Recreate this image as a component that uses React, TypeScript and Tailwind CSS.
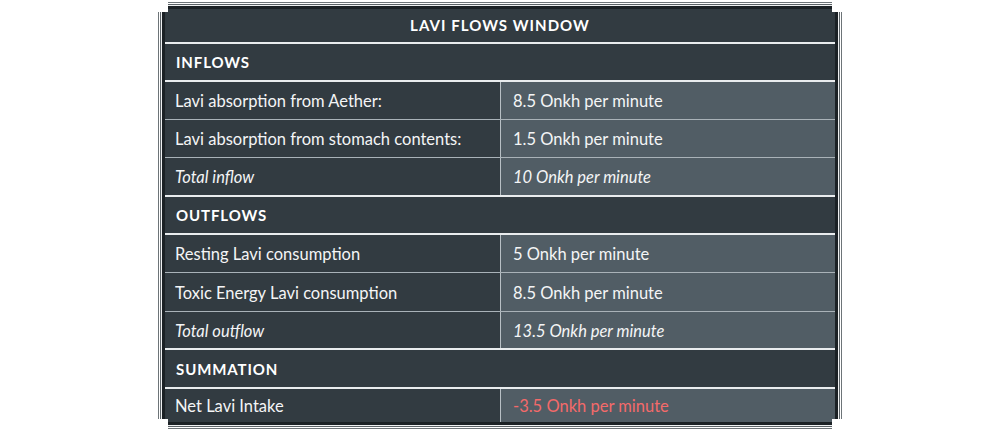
type Row = {
  kind: "section" | "data" | "total";
  label: string;
  value?: string;
  h: string;
  red?: boolean;
  line?: "thick" | "thin" | "none";
};

const rows: Row[] = [
  { kind: "section", label: "INFLOWS", h: "h-[38px]", line: "thick" },
  { kind: "data", label: "Lavi absorption from Aether:", value: "8.5 Onkh per minute", h: "h-[38px]", line: "thin" },
  { kind: "data", label: "Lavi absorption from stomach contents:", value: "1.5 Onkh per minute", h: "h-[38px]", line: "thin" },
  { kind: "total", label: "Total inflow", value: "10 Onkh per minute", h: "h-[39px]", line: "thick" },
  { kind: "section", label: "OUTFLOWS", h: "h-[38px]", line: "thick" },
  { kind: "data", label: "Resting Lavi consumption", value: "5 Onkh per minute", h: "h-[38px]", line: "thin" },
  { kind: "data", label: "Toxic Energy Lavi consumption", value: "8.5 Onkh per minute", h: "h-[39px]", line: "thin" },
  { kind: "total", label: "Total outflow", value: "13.5 Onkh per minute", h: "h-[38px]", line: "thick" },
  { kind: "section", label: "SUMMATION", h: "h-[39px]", line: "thick" },
  { kind: "data", label: "Net Lavi Intake", value: "-3.5 Onkh per minute", h: "h-[33px]", red: true, line: "none" },
];

function TableRow({ row }: { row: Row }) {
  const border =
    row.line === "thick"
      ? "border-b-2 border-[#e9ecee]"
      : row.line === "thin"
      ? "border-b border-[#a9b2b8]"
      : "";
  if (row.kind === "section") {
    return (
      <div className={`${row.h} ${border} shrink-0 flex items-center px-[11px] pt-px bg-[#323b41]`}>
        <span className="text-[15px] font-bold tracking-[0.06em] text-white">{row.label}</span>
      </div>
    );
  }
  const italic = row.kind === "total" ? "italic" : "";
  return (
    <div className={`${row.h} ${border} shrink-0 flex`}>
      <div className={`w-[336px] flex items-center px-[10px] pt-[2px] bg-[#323b41] border-r border-[#b8c0c5] text-[16.5px] text-[#f4f5f6] ${italic}`}>
        {row.label}
      </div>
      <div
        className={`flex-1 flex items-center px-[12px] pt-[2px] bg-[#515d65] text-[16.5px] ${italic} ${
          row.red ? "text-[#f46a6a]" : "text-[#f4f5f6]"
        }`}
      >
        {row.value}
      </div>
    </div>
  );
}

export default function App() {
  return (
    <div className="w-[1000px] h-[433px] bg-white flex items-start justify-center pt-[2px] font-['Lato',sans-serif]">
      {/* stepped frame, layered */}
      <div className="w-[684px] h-[427px] p-px bg-[#6d7478] [clip-path:polygon(10px_0,calc(100%_-_10px)_0,calc(100%_-_10px)_10px,100%_10px,100%_calc(100%_-_10px),calc(100%_-_10px)_calc(100%_-_10px),calc(100%_-_10px)_100%,10px_100%,10px_calc(100%_-_10px),0_calc(100%_-_10px),0_10px,10px_10px)]">
        <div className="w-full h-full p-px bg-white [clip-path:polygon(9px_0,calc(100%_-_9px)_0,calc(100%_-_9px)_9px,100%_9px,100%_calc(100%_-_9px),calc(100%_-_9px)_calc(100%_-_9px),calc(100%_-_9px)_100%,9px_100%,9px_calc(100%_-_9px),0_calc(100%_-_9px),0_9px,9px_9px)]">
          <div className="w-full h-full p-px bg-[#5c6367] [clip-path:polygon(8px_0,calc(100%_-_8px)_0,calc(100%_-_8px)_8px,100%_8px,100%_calc(100%_-_8px),calc(100%_-_8px)_calc(100%_-_8px),calc(100%_-_8px)_100%,8px_100%,8px_calc(100%_-_8px),0_calc(100%_-_8px),0_8px,8px_8px)]">
            <div className="w-full h-full p-px bg-[#eef0f1] [clip-path:polygon(7px_0,calc(100%_-_7px)_0,calc(100%_-_7px)_7px,100%_7px,100%_calc(100%_-_7px),calc(100%_-_7px)_calc(100%_-_7px),calc(100%_-_7px)_100%,7px_100%,7px_calc(100%_-_7px),0_calc(100%_-_7px),0_7px,7px_7px)]">
              <div className="w-full h-full p-[3px] bg-[#1b2125] [clip-path:polygon(6px_0,calc(100%_-_6px)_0,calc(100%_-_6px)_6px,100%_6px,100%_calc(100%_-_6px),calc(100%_-_6px)_calc(100%_-_6px),calc(100%_-_6px)_100%,6px_100%,6px_calc(100%_-_6px),0_calc(100%_-_6px),0_6px,6px_6px)]">
                <div className="w-full h-full flex flex-col bg-[#323b41] [clip-path:polygon(3px_0,calc(100%_-_3px)_0,calc(100%_-_3px)_3px,100%_3px,100%_calc(100%_-_3px),calc(100%_-_3px)_calc(100%_-_3px),calc(100%_-_3px)_100%,3px_100%,3px_calc(100%_-_3px),0_calc(100%_-_3px),0_3px,3px_3px)]">
                  <div className="h-[35px] shrink-0 border-b-2 border-[#e9ecee] flex items-center justify-center">
                    <span className="text-[15px] font-bold tracking-[0.07em] text-white">LAVI FLOWS WINDOW</span>
                  </div>
                  {rows.map((r, i) => (
                    <TableRow key={i} row={r} />
                  ))}
                </div>
              </div>
            </div>
          </div>
        </div>
      </div>
    </div>
  );
}
